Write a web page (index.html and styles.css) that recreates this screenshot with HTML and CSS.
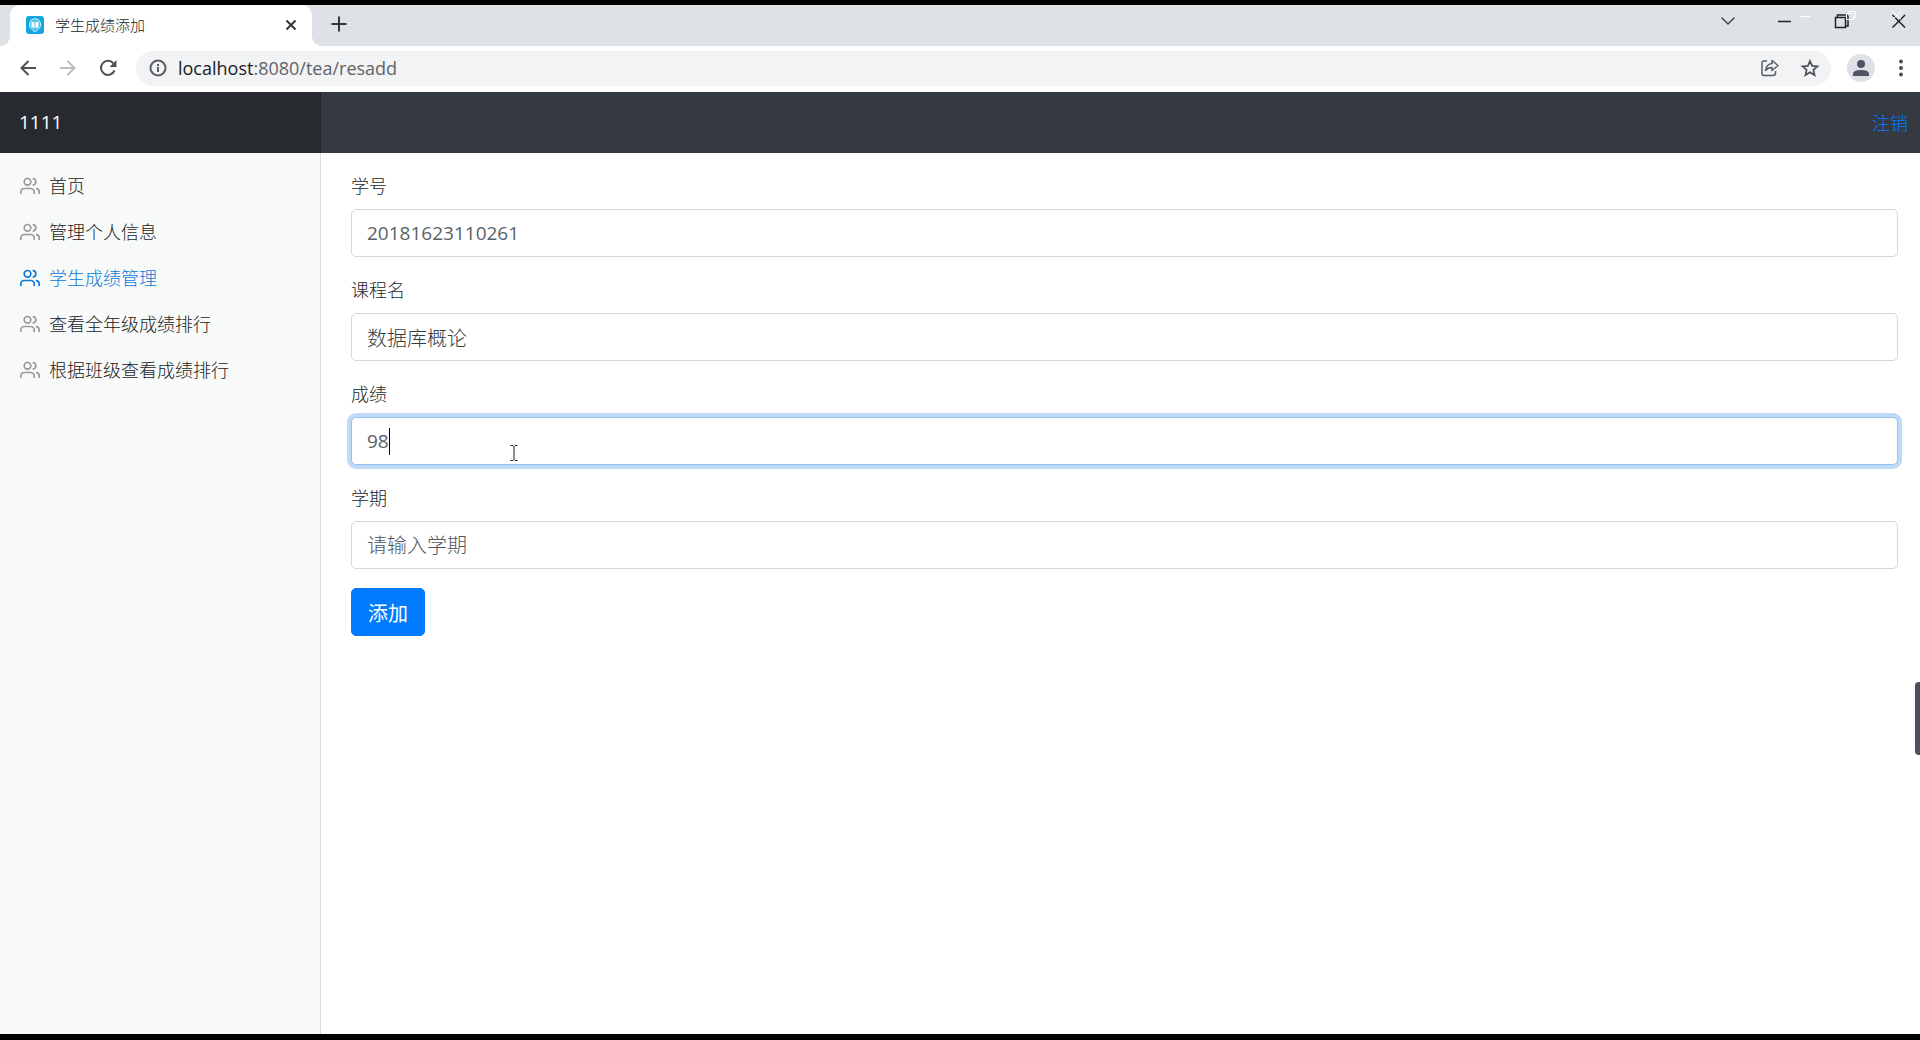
FILE: index.html
```html
<!DOCTYPE html>
<html lang="zh">

<head>
    <meta charset="UTF-8">
    <meta name="viewport" content="width=device-width, initial-scale=1.0">
    <title>学生成绩添加</title>
    <link rel="stylesheet" href="styles.css">
</head>

<body>
    <svg class="defs" aria-hidden="true">
        <symbol id="icon-users" viewBox="0 0 24 24">
            <path d="M17 21v-2a4 4 0 0 0-4-4H5a4 4 0 0 0-4 4v2"></path>
            <circle cx="9" cy="7" r="4"></circle>
            <path d="M23 21v-2a4 4 0 0 0-3-3.87"></path>
            <path d="M16 3.13a4 4 0 0 1 0 7.75"></path>
        </symbol>
    </svg>

    <!-- 浏览器标签栏 -->
    <header class="tabstrip">
        <div class="tab">
            <svg class="favicon" viewBox="0 0 18 18">
                <rect width="18" height="18" rx="3" fill="#16a5dc"></rect>
                <path d="M9 2.500a6 6 0 0 1 3 11L9 16l-3-2.500a6 6 0 0 1 3-11z" fill="#4fc1ea" stroke="#c4edfa"></path>
                <path d="M5.500 5.500l3 .8v5.700l-3-.8zM12.500 5.500l-3 .8v5.700l3-.8z" fill="#fff"></path>
            </svg>
            <span class="tab-title">学生成绩添加</span>
            <button class="icon-button" aria-label="关闭标签页">
                <svg width="12" height="12" viewBox="0 0 12 12" stroke="#33373b" stroke-width="2"><path d="M1.500 1.500l9 9M10.500 1.500l-9 9"></path></svg>
            </button>
        </div>
        <button class="icon-button new-tab" aria-label="新标签页">
            <svg width="16" height="16" viewBox="0 0 16 16" stroke="#33373b" stroke-width="2"><path d="M8 .5v15M.5 8h15"></path></svg>
        </button>
        <div class="window-buttons">
            <button class="icon-button" aria-label="搜索标签页">
                <svg width="14" height="8" viewBox="0 0 14 8" fill="none" stroke="#44484c" stroke-width="1.500"><path d="M.5.5L7 7 13.500.5"></path></svg>
            </button>
            <button class="icon-button" aria-label="最小化">
                <svg width="42" height="24" viewBox="0 0 42 24" fill="none"><path d="M14 12.500h13" stroke="#222" stroke-width="1.500"></path><path d="M36 7.500h10" stroke="#fff"></path></svg>
            </button>
            <button class="icon-button" aria-label="还原">
                <svg width="42" height="24" viewBox="0 0 42 24" fill="none">
                    <path d="M14.500 8.500h10v10h-10zM16.500 8V6h8.500q2 0 2 2v9h-2" stroke="#222" stroke-width="1.500"></path>
                    <path d="M25.500 4.500h7v6h-7zM27.500 4.500v-2h7v6h-2" stroke="#fff"></path>
                </svg>
            </button>
            <button class="icon-button" aria-label="关闭">
                <svg width="42" height="24" viewBox="0 0 42 24" fill="none"><path d="M14.500 6l12.500 12.500M27 6L14.500 18.500" stroke="#222" stroke-width="1.500"></path><path d="M14 2l9 8M24 2l-9 8" stroke="#fff"></path></svg>
            </button>
        </div>
    </header>

    <!-- 地址栏 -->
    <div class="toolbar">
        <button class="icon-button" aria-label="后退">
            <svg width="16" height="16" viewBox="0 0 16 16" fill="none" stroke="#4d5155" stroke-width="2"><path d="M16 8H2M8.500 1L1.500 8l7 7"></path></svg>
        </button>
        <button class="icon-button" aria-label="前进">
            <svg width="16" height="16" viewBox="0 0 16 16" fill="none" stroke="#bcbec0" stroke-width="2"><path d="M0 8h14M7.500 1l7 7-7 7"></path></svg>
        </button>
        <button class="icon-button" aria-label="重新加载">
            <svg width="18" height="18" viewBox="0 0 18 18" fill="none"><path d="M15.500 11.500A7 7 0 1 1 14.500 4.500" stroke="#4d5155" stroke-width="2"></path><path d="M17.500 1v7h-7z" fill="#4d5155"></path></svg>
        </button>
        <div class="omnibox">
            <svg width="18" height="18" viewBox="0 0 18 18" fill="none" stroke="#5a5e62" stroke-width="2"><circle cx="9" cy="9" r="7.500"></circle><path d="M9 8v5M9 5v2"></path></svg>
            <span class="url"><span class="host">localhost</span>:8080/tea/resadd</span>
            <button class="icon-button" aria-label="分享">
                <svg width="20" height="18" viewBox="0 0 20 18" fill="none" stroke="#5a5e62" stroke-width="1.500" stroke-linejoin="round"><path d="M7 2H4Q2 2 2 4v10q0 2.500 2 2.500h9q2.500 0 2.500-2.500v-2M12 1.500l6 5-6 5V8.500q-4 0-6.500 3Q6.500 5 12 4.500z"></path></svg>
            </button>
            <button class="icon-button" aria-label="收藏">
                <svg width="18" height="18" viewBox="0 0 18 18" fill="none" stroke="#4d5155" stroke-width="1.700"><path d="M9 2l2.100 4.900 5.300.5-4 3.500 1.200 5.200L9 13.300l-4.600 2.800 1.200-5.200-4-3.500 5.300-.5z"></path></svg>
            </button>
        </div>
        <button class="icon-button avatar" aria-label="用户">
            <svg width="16" height="16" viewBox="0 0 16 16" fill="#4e5566"><circle cx="8" cy="4" r="4"></circle><path d="M0 16v-2q0-4 8-4t8 4v2z"></path></svg>
        </button>
        <button class="icon-button" aria-label="菜单">
            <svg width="4" height="18" viewBox="0 0 4 18" fill="#4d5155"><circle cx="2" cy="2.500" r="2"></circle><circle cx="2" cy="9" r="2"></circle><circle cx="2" cy="15.500" r="2"></circle></svg>
        </button>
    </div>

    <nav class="navbar">
        <a class="navbar-brand" href="#">1111</a>
        <a class="logout" href="#">注销</a>
    </nav>

    <div class="container">
        <aside class="sidebar">
            <a class="nav-link" href="#"><svg><use href="#icon-users"></use></svg>首页</a>
            <a class="nav-link" href="#"><svg><use href="#icon-users"></use></svg>管理个人信息</a>
            <a class="nav-link active" href="#"><svg><use href="#icon-users"></use></svg>学生成绩管理</a>
            <a class="nav-link" href="#"><svg><use href="#icon-users"></use></svg>查看全年级成绩排行</a>
            <a class="nav-link" href="#"><svg><use href="#icon-users"></use></svg>根据班级查看成绩排行</a>
        </aside>
        <main class="main">
            <form>
                <div class="form-group">
                    <label for="sid">学号</label>
                    <input class="form-control number" id="sid" type="text" value="20181623110261">
                </div>
                <div class="form-group">
                    <label for="course">课程名</label>
                    <input class="form-control" id="course" type="text" value="数据库概论">
                </div>
                <div class="form-group">
                    <label for="score">成绩</label>
                    <input class="form-control number focused" id="score" type="text" value="98">
                    <span class="caret"></span>
                    <svg class="ibeam" width="8" height="18" viewBox="0 0 8 18" fill="none" stroke="#222"><path d="M.5 1.500H3L4 2.500 5 1.500h2.500M4 2.500v13M.5 16.500H3l1-1 1 1h2.500"></path></svg>
                </div>
                <div class="form-group">
                    <label for="term">学期</label>
                    <input class="form-control" id="term" type="text" placeholder="请输入学期">
                </div>
                <button class="btn" type="button">添加</button>
            </form>
        </main>
    </div>
    <div class="side-handle"></div>
</body>

</html>
```
FILE: styles.css
```css
* {
    box-sizing: border-box;
    margin: 0;
    padding: 0;
}

body {
    display: flex;
    flex-direction: column;
    min-height: 100vh;
    border-top: 5px solid #000;
    border-bottom: 6px solid #000;
    font-family: "Open Sans", "Noto Sans CJK SC", sans-serif;
    font-size: 18px;
    line-height: 28px;
    color: #212529;
    background-color: #fff;
    overflow-x: hidden;
}

a {
    text-decoration: none;
}

.defs {
    position: absolute;
    width: 0;
    height: 0;
}

.icon-button {
    display: flex;
    align-items: center;
    justify-content: center;
    flex-shrink: 0;
    width: 24px;
    height: 24px;
    border: none;
    background: none;
}

.icon-button svg {
    flex-shrink: 0;
    overflow: visible;
}

/* Browser window */
.tabstrip {
    display: flex;
    height: 41px;
    padding-left: 10px;
    background-color: #dee1e6;
}

.tab {
    position: relative;
    display: flex;
    align-items: center;
    width: 302px;
    padding: 0 9px 2px 16px;
    border-radius: 10px 10px 0 0;
    background-color: #fff;
}

/* curved feet of the active tab */
.tab::before,
.tab::after {
    content: "";
    position: absolute;
    bottom: 0;
    width: 10px;
    height: 10px;
}

.tab::before {
    right: 100%;
    background: radial-gradient(circle at 0 0, transparent 10px, #fff 10px);
}

.tab::after {
    left: 100%;
    background: radial-gradient(circle at 100% 0, transparent 10px, #fff 10px);
}

.favicon {
    width: 18px;
    height: 18px;
    margin-right: 11px;
}

.tab-title {
    flex: 1;
    font-size: 15px;
    font-weight: 300;
}

.new-tab {
    margin: 7px 0 0 15px;
}

.window-buttons {
    display: flex;
    gap: 15px;
    margin: 4px 0 0 auto;
}

.window-buttons .icon-button {
    width: 42px;
}

.toolbar {
    display: flex;
    align-items: center;
    gap: 16px;
    height: 46px;
    padding: 0 7px 2px 16px;
}

.omnibox {
    display: flex;
    flex: 1;
    align-items: center;
    gap: 16px;
    height: 35px;
    padding: 0 9px 0 13px;
    border-radius: 18px;
    background-color: #f1f3f4;
}

.url {
    flex: 1;
    margin-left: -5px;
    color: #5f6368;
}

.host {
    color: #202124;
}

.avatar {
    width: 28px;
    height: 28px;
    margin-right: -2px;
    border-radius: 50%;
    background-color: #dee1e6;
}

/* Page */
.navbar {
    display: flex;
    align-items: center;
    justify-content: space-between;
    height: 61px;
    padding-right: 12px;
    background-color: #343a40;
}

.navbar-brand {
    width: 321px;
    padding: 16px 19px;
    color: #fff;
    background-color: #272b30;
    box-shadow: inset -1px 0 0 #212529;
    font-size: 19px;
    line-height: 29px;
}

.logout {
    color: #007bff;
    font-weight: 300;
}

.container {
    display: flex;
    flex: 1;
}

.sidebar {
    width: 321px;
    padding-top: 10px;
    background-color: #f8faf9;
    border-right: 1px solid #dcdee0;
}

.nav-link {
    display: flex;
    align-items: center;
    gap: 9px;
    height: 46px;
    padding-left: 20px;
    color: #222;
    font-weight: 300;
}

.nav-link svg {
    width: 20px;
    height: 20px;
    fill: none;
    stroke: #999;
    stroke-width: 2;
    stroke-linecap: round;
    stroke-linejoin: round;
}

.nav-link.active {
    color: #0b78d4;
}

.nav-link.active svg {
    stroke: #0b78d4;
}

.main {
    flex: 1;
    padding: 19px 22px 19px 30px;
}

.form-group {
    position: relative;
    margin-bottom: 19px;
}

.form-group label {
    display: block;
    margin-bottom: 9px;
    font-weight: 300;
}

.form-control {
    display: block;
    width: 100%;
    height: 48px;
    padding: 0 15px;
    border: 1px solid #d3d7db;
    border-radius: 5px;
    outline: none;
    color: #343a40;
    background-color: #fff;
    font-family: inherit;
    font-size: 20px;
    font-weight: 300;
}

.form-control.number {
    color: #5a6168;
    font-size: 19px;
    font-weight: 400;
}

.form-control::placeholder {
    color: #50575e;
    opacity: 1;
}

.form-control:focus,
.form-control.focused {
    border-color: #94c1ee;
    box-shadow: 0 0 0 4px #c0dbf6;
}

/* text caret and mouse pointer over the score field */
.caret {
    position: absolute;
    top: 48px;
    left: 38px;
    width: 1px;
    height: 27px;
    background-color: #000;
}

.ibeam {
    position: absolute;
    top: 64px;
    left: 159px;
}

.btn {
    display: block;
    height: 48px;
    padding: 0 16px;
    border: 1px solid #007bff;
    border-radius: 5px;
    color: #fff;
    background-color: #007bff;
    font-family: inherit;
    font-size: 20px;
}

.side-handle {
    position: absolute;
    top: 682px;
    right: 0;
    width: 5px;
    height: 73px;
    border-radius: 4px 0 0 4px;
    background-color: #4b515b;
}
```
